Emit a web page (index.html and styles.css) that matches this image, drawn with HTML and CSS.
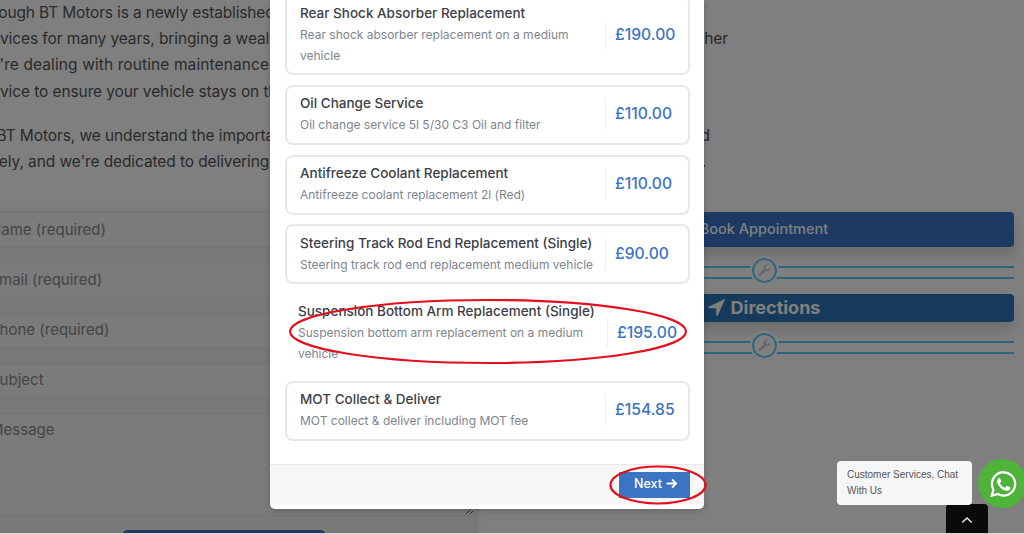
FILE: index.html
```html
<!DOCTYPE html>
<html lang="en">
<head>
    <meta charset="UTF-8">
    <meta name="viewport" content="width=device-width, initial-scale=1.0">
    <title>BT Motors</title>
    <link rel="stylesheet" href="styles.css">
</head>
<body>
    <div class="stage">
        <div class="page">
            <div class="intro">
                <p class="line line-first">Through BT Motors is a newly established</p>
                <p class="line line-wide"><span>services for many years, bringing a wealth</span><span>other</span></p>
                <p class="line line-third">we're dealing with routine maintenance</p>
                <p class="line">service to ensure your vehicle stays on the</p>
            </div>
            <div class="intro">
                <p class="line line-mid"><span>At BT Motors, we understand the importance</span><span>and</span></p>
                <p class="line line-short"><span>safely, and we're dedicated to delivering</span><span>.</span></p>
            </div>

            <div class="columns">
                <form class="contact-form">
                    <input class="field" type="text" placeholder="Name (required)">
                    <input class="field" type="text" placeholder="Email (required)">
                    <input class="field" type="text" placeholder="Phone (required)">
                    <input class="field" type="text" placeholder="Subject">
                    <textarea class="field field-message" placeholder="Message"></textarea>
                    <button class="send-btn" type="button"></button>
                </form>

                <div class="actions">
                    <a class="action-btn book-btn">Book Appointment</a>
                    <div class="divider">
                        <span class="divider-badge">
                            <svg viewBox="0 0 24 24" width="15" height="15"><path class="wrench" d="M21.5 6.2a6 6 0 0 1-8 7L6 20.8a2.3 2.3 0 0 1-3.2-3.2l7.6-7.5a6 6 0 0 1 7-8L14 6.5l.6 3.3 3.3.6z"/></svg>
                        </span>
                    </div>
                    <a class="action-btn directions-btn">
                        <svg viewBox="0 0 24 24" width="18" height="18"><path class="arrow-fill" d="M23 1 1 11.5c-1 .6-.7 2 .5 2H11v9.400c0 1.200 1.500 1.500 2 .5z"/></svg>
                        Directions
                    </a>
                    <div class="divider">
                        <span class="divider-badge">
                            <svg viewBox="0 0 24 24" width="15" height="15"><path class="wrench" d="M21.5 6.2a6 6 0 0 1-8 7L6 20.8a2.3 2.3 0 0 1-3.2-3.2l7.6-7.5a6 6 0 0 1 7-8L14 6.5l.6 3.3 3.3.6z"/></svg>
                        </span>
                    </div>
                </div>
            </div>
        </div>

        <div class="backdrop"></div>

        <div class="modal">
            <div class="modal-body">
                <div class="service-list">
                    <div class="service-card">
                        <div class="service-info">
                            <h3>Rear Shock Absorber Replacement</h3>
                            <p>Rear shock absorber replacement on a medium vehicle</p>
                        </div>
                        <div class="service-price">£190.00</div>
                    </div>
                    <div class="service-card">
                        <div class="service-info">
                            <h3>Oil Change Service</h3>
                            <p>Oil change service 5l 5/30 C3 Oil and filter</p>
                        </div>
                        <div class="service-price">£110.00</div>
                    </div>
                    <div class="service-card">
                        <div class="service-info">
                            <h3>Antifreeze Coolant Replacement</h3>
                            <p>Antifreeze coolant replacement 2l (Red)</p>
                        </div>
                        <div class="service-price">£110.00</div>
                    </div>
                    <div class="service-card">
                        <div class="service-info">
                            <h3>Steering Track Rod End Replacement (Single)</h3>
                            <p>Steering track rod end replacement medium vehicle</p>
                        </div>
                        <div class="service-price">£90.00</div>
                    </div>
                    <div class="service-card service-card-selected">
                        <div class="service-info">
                            <h3>Suspension Bottom Arm Replacement (Single)</h3>
                            <p>Suspension bottom arm replacement on a medium vehicle</p>
                        </div>
                        <div class="service-price">£195.00</div>
                    </div>
                    <div class="service-card">
                        <div class="service-info">
                            <h3>MOT Collect &amp; Deliver</h3>
                            <p>MOT collect &amp; deliver including MOT fee</p>
                        </div>
                        <div class="service-price">£154.85</div>
                    </div>
                </div>
            </div>
            <div class="modal-footer">
                <button class="next-btn" type="button">
                    Next
                    <svg viewBox="0 0 24 24" width="13" height="13"><path class="next-arrow" d="M3 12h17M13 4.500l7.500 7.500-7.500 7.500"/></svg>
                </button>
            </div>
        </div>

        <!-- red rings drawn over the screenshot -->
        <svg class="marks" viewBox="0 0 1024 534" width="1024" height="534">
            <ellipse class="mark" cx="488" cy="331.500" rx="198" ry="31.500"/>
            <ellipse class="mark" cx="658" cy="485" rx="47.500" ry="18.500"/>
        </svg>

        <a class="scroll-top">
            <svg viewBox="0 0 24 24" width="12" height="12"><path class="chevron" d="M2.500 17 12 8l9.500 9"/></svg>
        </a>
        <div class="chat-bubble">Customer Services, Chat With Us</div>
        <a class="chat-btn">
            <svg viewBox="0 0 32 32" width="30" height="30">
                <path class="wa-ring" d="M4 28.500l1.800-6.500a12.400 12.400 0 1 1 4.700 4.700z"/>
                <path class="wa-phone" d="M12.300 9.500c-.4 0-1 .2-1.500.8-.6.6-1.300 1.600-1.300 3 0 1.700 1.200 3.400 1.500 3.800.2.300 2.500 3.900 6 5.300 2.900 1.100 3.500.9 4.100.8.700-.1 2.100-.9 2.400-1.700.3-.9.300-1.600.2-1.700-.1-.2-.3-.3-.7-.5l-2.500-1.200c-.4-.1-.6-.2-.9.200l-1.100 1.400c-.2.200-.4.300-.8.100-.4-.2-1.500-.6-2.900-1.800-1.100-1-1.800-2.200-2-2.500-.2-.4 0-.6.200-.8l.6-.7c.2-.2.200-.4.400-.6.100-.3 0-.5 0-.7l-1.100-2.700c-.3-.7-.6-.6-.9-.6z"/>
            </svg>
        </a>
    </div>
</body>
</html>
```

FILE: styles.css
```css
:root {
    --primary: #3b74c2;
    --text: #3c4048;
    --muted: #7c8590;
    --line: #e5e7ea;
    --rule: #5ac8ff;
}

* {
    box-sizing: border-box;
}

body {
    margin: 0;
    background: #d8d8d8;
    font-family: 'Inter', 'Liberation Sans', sans-serif;
}

.stage {
    position: relative;
    width: 1024px;
    height: 533px;
    overflow: hidden;
    background: #fff;
}

.page {
    margin-left: -23px;
    width: 1037px;
}

.intro {
    margin-bottom: 18px;
    color: #555;
    font-size: 15.5px;
    letter-spacing: -0.1px;
    line-height: 26.2px;
}

.line {
    margin: 0;
    white-space: nowrap;
}

.line-first {
    margin-left: -3px;
    letter-spacing: -0.15px;
}

.line-third {
    margin-left: 1px;
    letter-spacing: 0.1px;
}

.line-wide,
.line-mid,
.line-short {
    display: flex;
    justify-content: space-between;
}

.line-wide {
    width: 751px;
}

.line-mid {
    width: 733px;
}

.line-short {
    width: 729px;
}

.columns {
    display: flex;
    gap: 40px;
    margin-top: 37px;
}

.contact-form {
    display: flex;
    flex-direction: column;
    flex: none;
    gap: 14.2px;
    width: 497px;
    height: 360px;
    background: #f3f3f3;
    box-shadow: 2px 0 8px rgba(0, 0, 0, 0.12);
}

.field {
    display: block;
    flex: none;
    width: 100%;
    height: 36px;
    padding: 0 12px 2px 13px;
    border: 0;
    border-top: 1px solid #e6e6e6;
    border-bottom: 1px solid #e6e6e6;
    background: #f6f6f6;
    font-family: inherit;
    font-size: 15px;
    color: #777;
}

.field::placeholder {
    color: #888;
    opacity: 1;
}

.field-message {
    height: 103px;
    padding-top: 6px;
    line-height: 20px;
}

.send-btn {
    flex: none;
    width: 204px;
    height: 30px;
    margin: 0 0 0 145px;
    border: 0;
    border-radius: 6px 6px 0 0;
    background: var(--primary);
}

.actions {
    width: 500px;
}

.action-btn {
    display: flex;
    align-items: center;
    justify-content: center;
    gap: 5px;
    padding-bottom: 2px;
    border-radius: 4px;
    color: #fff;
    box-shadow: 0 8px 14px rgba(0, 0, 0, 0.16);
}

.book-btn {
    height: 35px;
    background: #3874c8;
    font-size: 14.5px;
    font-weight: 500;
}

.directions-btn {
    height: 28px;
    background: #2c74b8;
    font-size: 18px;
    font-weight: 700;
}

.arrow-fill {
    fill: #fff;
}

.divider {
    display: flex;
    align-items: center;
    justify-content: center;
    position: relative;
    height: 47px;
}

.divider::before {
    content: "";
    position: absolute;
    left: 0;
    right: 0;
    top: 19px;
    height: 9px;
    border-top: 2px solid var(--rule);
    border-bottom: 2px solid var(--rule);
}

.divider-badge {
    display: flex;
    align-items: center;
    justify-content: center;
    position: relative;
    width: 25px;
    height: 25px;
    border: 2px solid var(--rule);
    border-radius: 50%;
    background: #fff;
    outline: 2px solid #fff;
}

.wrench {
    fill: #d0d0d0;
}

.backdrop {
    position: absolute;
    inset: 0;
    background: rgba(0, 0, 0, 0.5);
}

.modal {
    position: absolute;
    left: 270px;
    top: 0;
    display: flex;
    flex-direction: column;
    width: 434px;
    height: 509px;
    padding-bottom: 4px;
    border-radius: 0 0 5px 5px;
    background: #fff;
    box-shadow: 0 2px 6px rgba(0, 0, 0, 0.2);
}

.modal-body {
    flex: 1;
    overflow: hidden;
    padding: 0 14px 0 15px;
}

.service-list {
    display: flex;
    flex-direction: column;
    gap: 9.75px;
    margin-top: -5px;
}

.service-card {
    display: flex;
    align-items: center;
    min-height: 60px;
    padding: 6px 0 7px 13px;
    border: 2px solid var(--line);
    border-radius: 8px;
}

.service-card-selected {
    border-color: #fff;
    padding: 5px 0 5px 11px;
}

.service-info {
    flex: 1;
    min-width: 0;
}

.service-info h3 {
    margin: 0;
    color: var(--text);
    font-size: 13.5px;
    font-weight: 500;
    line-height: 20px;
    white-space: nowrap;
}

.service-info p {
    margin: 1px 0 0;
    color: var(--muted);
    font-size: 12px;
    line-height: 21px;
}

.service-price {
    flex: none;
    width: 83px;
    margin-left: 11px;
    padding-left: 9px;
    border-left: 1px solid #f0f0f0;
    color: var(--primary);
    font-size: 15.7px;
    font-weight: 500;
    line-height: 30px;
    white-space: nowrap;
}

.service-card-selected .service-price {
    width: 81px;
}

.modal-footer {
    display: flex;
    align-items: flex-start;
    justify-content: flex-end;
    height: 41px;
    padding: 7px 14px 0 0;
    border-top: 1px solid #e8e8e8;
    background: #f7f7f7;
}

.next-btn {
    display: flex;
    align-items: center;
    justify-content: center;
    gap: 3px;
    width: 71px;
    height: 26px;
    padding: 0 0 3px 3px;
    border: 0;
    background: var(--primary);
    color: #fff;
    font-family: inherit;
    font-size: 12.5px;
    font-weight: 500;
}

.next-arrow {
    fill: none;
    stroke: #fff;
    stroke-width: 3.5;
}

.marks {
    position: absolute;
    left: 0;
    top: 0;
    pointer-events: none;
}

.mark {
    fill: none;
    stroke: #e30f1e;
    stroke-width: 2.2;
}

.scroll-top {
    position: absolute;
    left: 946px;
    top: 504px;
    display: flex;
    align-items: center;
    justify-content: center;
    width: 42px;
    height: 30px;
    padding-top: 2px;
    border-radius: 4px 4px 0 0;
    background: #0a0a0a;
}

.chevron {
    fill: none;
    stroke: #e8e8e8;
    stroke-width: 3;
}

.chat-bubble {
    position: absolute;
    left: 837px;
    top: 461px;
    width: 135px;
    height: 44px;
    padding: 6px 10px;
    border-radius: 4px;
    background: #f5f6f8;
    color: #555;
    font-family: 'Liberation Sans', Arial, sans-serif;
    font-size: 10px;
    line-height: 16px;
}

.chat-btn {
    position: absolute;
    left: 978px;
    top: 459px;
    display: flex;
    align-items: center;
    justify-content: center;
    width: 49px;
    height: 49px;
    border-radius: 50%;
    background: #4fb33b;
}

.wa-ring {
    fill: none;
    stroke: #fff;
    stroke-width: 2.4;
}

.wa-phone {
    fill: #fff;
}
```
